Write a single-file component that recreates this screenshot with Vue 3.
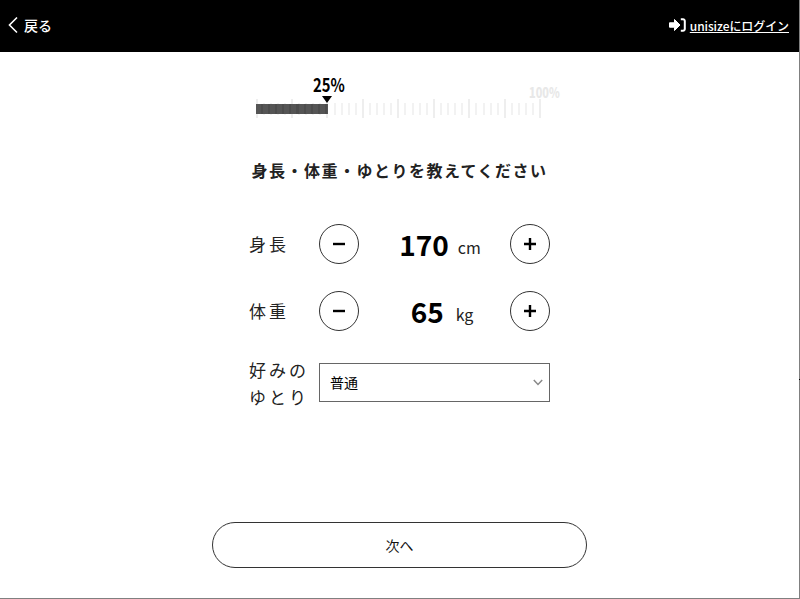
<script setup>
const ticks = Array.from({ length: 41 }, (_, i) => i)
const tickClass = (i) => (i % 5 === 0 ? 'tick major' : 'tick')
</script>

<template>
  <div class="page">
    <i class="edge-mark"></i>
    <header class="top">
      <a class="back">
        <svg width="12" height="18" viewBox="0 0 12 18"><path d="M10 1.500 2.500 9l7.500 7.500" fill="none" stroke="#fff" stroke-width="1.600"/></svg>
        <span>戻る</span>
      </a>
      <a class="login">
        <svg width="17" height="14" viewBox="0 0 17 14"><path fill="#fff" stroke="#fff" stroke-width="1" stroke-linejoin="round" d="M.5 4.800H5.500V1.500L11 7 5.500 12.500V9.200H.5z"/><path d="M11.800 1.200h2.200a1.800 1.800 0 0 1 1.800 1.800v8a1.800 1.800 0 0 1-1.800 1.800h-2.200" fill="none" stroke="#fff" stroke-width="2"/></svg>
        <span class="login-text">unisizeにログイン</span>
      </a>
    </header>
    <main class="body">
      <div class="progress">
        <div class="scale">
          <span class="pct">25%</span>
          <span class="arrow"></span>
          <span class="end">100%</span>
          <div class="ticks"><i v-for="i in ticks" :key="i" :class="tickClass(i)"></i></div>
          <div class="fill"></div>
        </div>
      </div>
      <h1 class="title">身長・体重・ゆとりを教えてください</h1>
      <div class="form">
        <div class="row">
          <span class="label">身長</span>
          <button class="round"><svg width="14" height="14" viewBox="0 0 14 14"><path d="M1 7h12" stroke="#000" stroke-width="2.400"/></svg></button>
          <div class="value height"><b>170</b><span>cm</span></div>
          <button class="round"><svg width="14" height="14" viewBox="0 0 14 14"><path d="M1 7h12M7 1v12" stroke="#000" stroke-width="2.400"/></svg></button>
        </div>
        <div class="row">
          <span class="label">体重</span>
          <button class="round"><svg width="14" height="14" viewBox="0 0 14 14"><path d="M1 7h12" stroke="#000" stroke-width="2.400"/></svg></button>
          <div class="value weight"><b>65</b><span>kg</span></div>
          <button class="round"><svg width="14" height="14" viewBox="0 0 14 14"><path d="M1 7h12M7 1v12" stroke="#000" stroke-width="2.400"/></svg></button>
        </div>
        <div class="row pref">
          <span class="label">好みの<br>ゆとり</span>
          <div class="select">
            <span>普通</span>
            <svg width="10" height="7" viewBox="0 0 10 7"><path d="M.8 1 5 5.400 9.200 1" fill="none" stroke="#888" stroke-width="1.500"/></svg>
          </div>
        </div>
      </div>
      <button class="next">次へ</button>
    </main>
  </div>
</template>

<style>
html, body { margin: 0; background: #fff; }
</style>

<style scoped>
.page { position: relative; width: 800px; height: 599px; display: flex; flex-direction: column; box-sizing: border-box; border-bottom: 1px solid #808080; border-right: 1px solid #808080; font-family: "Noto Sans CJK JP", "Noto Sans", sans-serif; color: #111; }
.edge-mark { position: absolute; right: -1px; top: 379px; width: 1px; height: 1px; background: #000; }
.top { height: 52px; flex: none; background: #000; color: #fff; display: flex; align-items: center; justify-content: space-between; padding: 0 10px 2px 7px; box-sizing: border-box; }
.back { display: flex; align-items: center; gap: 5px; font-size: 14px; font-weight: 500; }
.login { display: flex; align-items: center; gap: 4px; font-size: 12px; font-weight: 500; }
.login-text { text-decoration: underline; letter-spacing: -.08px; }
.body { flex: 1; display: flex; flex-direction: column; align-items: center; position: relative; }
.progress { margin-top: 24px; height: 44px; width: 300px; box-sizing: border-box; padding-left: 6px; }
.scale { position: relative; width: 286px; height: 44px; }
.pct { position: absolute; left: 57px; top: -3px; font-size: 19px; font-weight: 700; line-height: 22px; color: #000; transform: scaleX(.78); transform-origin: left; }
.arrow { position: absolute; z-index: 1; left: 66px; top: 20px; border: 5px solid transparent; border-top: 7px solid #000; border-bottom: 0; }
.end { position: absolute; left: 273px; top: 8px; font-size: 14px; font-weight: 900; color: #e8e8e8; line-height: 16px; transform: scaleX(.78); transform-origin: left; }
.ticks { position: absolute; left: 0; top: 23px; width: 286px; height: 19px; display: flex; justify-content: space-between; align-items: center; }
.tick { width: 2px; height: 12px; background: #f2f2f2; }
.tick.major { height: 19px; background: #eee; }
.fill { position: absolute; left: 0; top: 28px; width: 72px; height: 10px; background: repeating-linear-gradient(90deg, #555 0 5px, #4c4c4c 5px 7.100px); }
.title { margin: 38px 0 0; font-size: 16px; font-weight: 700; letter-spacing: 1.500px; line-height: 24px; color: #222; }
.form { margin-top: 42px; width: 301px; display: flex; flex-direction: column; gap: 27px; }
.row { display: flex; align-items: center; height: 40px; }
.label { width: 70px; flex: none; font-size: 17px; letter-spacing: 3px; line-height: 26px; color: #222; }
.round { width: 40px; height: 40px; flex: none; border-radius: 50%; border: 1px solid #333; background: #fff; padding: 0; display: flex; align-items: center; justify-content: center; }
.value { flex: 1; display: flex; align-items: baseline; justify-content: center; color: #000; }
.value.height { gap: 9px; padding-left: 11px; }
.value.weight { gap: 12px; padding-left: 15px; }
.value b { font-size: 28px; font-weight: 700; }
.value span { font-size: 16px; color: #222; transform: translateY(-2px); }
.pref { margin-top: 4px; }
.pref .label { line-height: 27px; padding-top: 2px; }
.select { width: 231px; height: 39px; box-sizing: border-box; border: 1px solid #666; display: flex; align-items: center; justify-content: space-between; padding: 0 6px 0 10px; font-size: 14px; color: #000; }
.next { position: absolute; left: 212px; top: 470px; width: 375px; height: 46px; border-radius: 23px; border: 1px solid #333; background: #fff; padding: 0; font-family: inherit; font-size: 14px; font-weight: 400; color: #111; }
</style>
